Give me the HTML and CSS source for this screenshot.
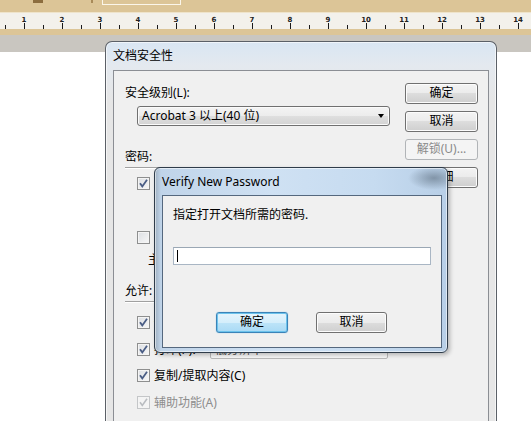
FILE: index.html
```html
<!DOCTYPE html>
<html lang="zh">
<head>
<meta charset="utf-8">
<title>文档安全性</title>
<link rel="stylesheet" href="styles.css">
</head>
<body>
<div class="toolbar">
  <div class="tb-icon"></div>
  <div class="tb-mark"></div>
  <div class="tb-box"></div>
</div>
<div class="ruler">
  <div class="ruler-nums">
    <span>1</span><span>2</span><span>3</span><span>4</span><span>5</span><span>6</span><span>7</span><span>8</span><span>9</span><span>10</span><span>11</span><span>12</span><span>13</span><span>14</span>
  </div>
</div>
<div class="ruler-edge"></div>
<div class="workspace">
  <div class="desk-band"></div>
  <div class="win dlg-main">
    <div class="win-title">文档安全性</div>
    <div class="panel">
      <div class="col-left">
        <div class="lbl lbl-level">安全级别(L):</div>
        <div class="combo">
          <span class="combo-text">Acrobat 3 以上(40 位)</span>
          <span class="combo-arrow"></span>
        </div>
        <div class="lbl grp-pass">密码:</div>
        <div class="sep"></div>
        <div class="row row-p1">
          <span class="cb"><svg width="11" height="11" viewBox="0 0 11 11"><path d="M2 5.2 L4.3 8.4 L9 1.8" fill="none" stroke="#4a5d85" stroke-width="1.8"/></svg></span>
          <span class="row-text">要求打开文档的密码(O)</span>
        </div>
        <div class="row row-p2">
          <span class="cb"></span>
          <span class="row-text">限制文档编辑和打印(R)</span>
        </div>
        <div class="lbl sub-text">主密码(M):</div>
        <div class="lbl grp-allow">允许:</div>
        <div class="sep"></div>
        <div class="row row-a1">
          <span class="cb"><svg width="11" height="11" viewBox="0 0 11 11"><path d="M2 5.2 L4.3 8.4 L9 1.8" fill="none" stroke="#4a5d85" stroke-width="1.8"/></svg></span>
          <span class="row-text">修改文档(M)</span>
        </div>
        <div class="row row-a2">
          <span class="cb"><svg width="11" height="11" viewBox="0 0 11 11"><path d="M2 5.2 L4.3 8.4 L9 1.8" fill="none" stroke="#4a5d85" stroke-width="1.8"/></svg></span>
          <span class="row-text print-lbl">打印(P):</span>
          <span class="mini-combo">低分辨率</span>
        </div>
        <div class="row row-a3">
          <span class="cb"><svg width="11" height="11" viewBox="0 0 11 11"><path d="M2 5.2 L4.3 8.4 L9 1.8" fill="none" stroke="#4a5d85" stroke-width="1.8"/></svg></span>
          <span class="row-text">复制/提取内容(C)</span>
        </div>
        <div class="row row-a4 disabled">
          <span class="cb"><svg width="11" height="11" viewBox="0 0 11 11"><path d="M2 5.2 L4.3 8.4 L9 1.8" fill="none" stroke="#b9bcc0" stroke-width="1.6"/></svg></span>
          <span class="row-text">辅助功能(A)</span>
        </div>
        <div class="row row-a5 disabled">
          <span class="cb"></span>
          <span class="row-text">页面提取(E)</span>
        </div>
      </div>
      <div class="col-right">
        <div class="btn">确定</div>
        <div class="btn">取消</div>
        <div class="btn btn-disabled">解锁(U)...</div>
        <div class="btn">详细</div>
      </div>
    </div>
  </div>

  <div class="win dlg-verify">
    <div class="verify-title">Verify New Password</div>
    <div class="verify-client">
      <div class="lbl verify-msg">指定打开文档所需的密码.</div>
      <div class="pw-field"><span class="caret"></span></div>
      <div class="verify-buttons">
        <div class="btn btn-default">确定</div>
        <div class="btn">取消</div>
      </div>
    </div>
  </div>
</div>
</body>
</html>
```

FILE: styles.css
```css
* { box-sizing: border-box; }
html, body { margin: 0; padding: 0; }
body {
  width: 531px;
  height: 421px;
  overflow: hidden;
  background: #fff;
  font-family: "Noto Sans", "Noto Sans CJK SC", sans-serif;
  font-size: 12px;
  line-height: 16px;
  color: #000;
}

/* ---------- top toolbar & ruler ---------- */
.toolbar {
  height: 13px;
  background: #dcc597;
  border-bottom: 1px solid #efe4cb;
  display: flex;
  align-items: flex-start;
}
.tb-icon {
  width: 10px;
  height: 3px;
  margin-left: 33px;
  background: #8c6d3e;
}
.tb-mark {
  width: 2px;
  height: 3px;
  margin-left: 48px;
  background: #a88a58;
}
.tb-box {
  width: 79px;
  height: 5px;
  margin-left: 9px;
  border: 1px solid #fbf6ea;
  border-top: none;
}
.ruler {
  height: 16px;
  background:
    linear-gradient(90deg, #1a1a1a 0 1px, transparent 1px) 24px 10px / 38px 6px repeat-x,
    linear-gradient(90deg, #1a1a1a 0 1px, transparent 1px) 5px 12px / 38px 4px repeat-x,
    #f3f1eb;
  overflow: hidden;
}
.ruler-nums {
  display: flex;
  padding: 4px 0 0 5px;
}
.ruler-nums span {
  flex: 0 0 38px;
  text-align: center;
  font: bold 7px/7px "DejaVu Sans", sans-serif;
  color: #222;
}
.ruler-edge {
  height: 6px;
  background: #dcc597;
}
.workspace {
  position: relative;
  height: 386px;
  background: #fff;
}
.desk-band {
  height: 17px;
  background: #c9c6c0;
}

/* ---------- generic window ---------- */
.win { position: absolute; }

/* main dialog */
.dlg-main {
  left: 105px;
  top: 6px;
  width: 392px;
  height: 400px;
  border: 1px solid #5b6067;
  border-bottom: none;
  border-radius: 7px 7px 0 0;
  background: linear-gradient(#d9e6f3 0, #e4e9ef 24px, #e6e6e6 60px);
  box-shadow: inset 0 0 0 1px rgba(255,255,255,.6);
  padding: 0 7px;
  display: flex;
  flex-direction: column;
}
.win-title {
  height: 28px;
  line-height: 27px;
  flex: none;
}
.panel {
  flex: 1;
  border: 1px solid #8b8e94;
  background: #f0f0f0;
  display: grid;
  grid-template-columns: 1fr 73px;
  align-items: start;
  padding: 12px 10px 0 11px;
}
.col-left {
  display: flex;
  flex-direction: column;
}
.col-right {
  display: flex;
  flex-direction: column;
  gap: 7px;
}
.lbl { height: 16px; white-space: nowrap; }
.lbl-level { margin-top: 2px; }
.combo {
  margin: 5px 0 0 12px;
  width: 253px;
  height: 20px;
  border: 1px solid #707070;
  border-radius: 3px;
  background: linear-gradient(#f4f4f4 0%, #ececec 50%, #dfdfdf 50%, #d3d3d3 100%);
  box-shadow: inset 0 0 0 1px #fbfbfb;
  display: flex;
  align-items: center;
  justify-content: space-between;
  padding: 0 5px 0 4px;
}
.combo-text { line-height: 16px; }
.combo-arrow {
  width: 0;
  height: 0;
  border-left: 3.5px solid transparent;
  border-right: 3.5px solid transparent;
  border-top: 4px solid #000;
}
.grp-pass { margin-top: 23px; }
.sep {
  margin-top: 2px;
  width: 270px;
  height: 2px;
  border-top: 1px solid #a0a0a0;
  border-bottom: 1px solid #fff;
}
.row {
  height: 13px;
  display: flex;
  align-items: center;
  padding-left: 12px;
  white-space: nowrap;
}
.cb {
  flex: none;
  width: 13px;
  height: 13px;
  border: 1px solid #8e8f8f;
  background: linear-gradient(135deg, #dcdfe3, #f7f7f7);
  box-shadow: inset 0 0 0 1px #f4f4f4;
  display: flex;
  align-items: center;
  justify-content: center;
}
.row-text { margin-left: 4px; }
.row-p1 { margin-top: 8px; }
.row-p2 { margin-top: 41px; }
.sub-text { margin-top: 8px; padding-left: 23px; }
.grp-allow { margin-top: 15px; }
.row-a1 { margin-top: 13px; }
.row-a2 { margin-top: 14px; }
.row-a3 { margin-top: 13px; }
.row-a4 { margin-top: 14px; }
.row-a5 { margin-top: 13px; }
.print-lbl { width: 56px; }
.mini-combo {
  width: 178px;
  height: 18px;
  flex: none;
  border: 1px solid #b9b9b9;
  border-radius: 2px;
  background: #f7f7f7;
  color: #555;
  padding-left: 4px;
  line-height: 16px;
}
.disabled .cb {
  border-color: #c4c6c8;
  background: #f4f4f4;
}
.disabled .row-text { color: #8d8d8d; }

/* buttons (Win7 look) */
.btn {
  height: 21px;
  border: 1px solid #707070;
  border-radius: 3px;
  background: linear-gradient(#f3f3f3 0%, #ebebeb 50%, #dddddd 50%, #cfcfcf 100%);
  box-shadow: inset 0 0 0 1px #fcfcfc;
  text-align: center;
  line-height: 18px;
  white-space: nowrap;
}
.btn-disabled {
  border-color: #b1b4b7;
  background: #f4f4f4;
  box-shadow: none;
  color: #8a8a8a;
}
.btn-default {
  border-color: #3b83b8;
  background: linear-gradient(#e6f4fc 0%, #d4eefb 50%, #bde4f8 50%, #a9daf5 100%);
  box-shadow: inset 0 0 0 1px #6cc3ec, 0 0 1px #5ab8e6;
}

/* verify dialog */
.dlg-verify {
  left: 154px;
  top: 132px;
  width: 294px;
  height: 186px;
  border: 1px solid #2f3c4a;
  border-radius: 6px;
  background:
    radial-gradient(ellipse 26px 12px at 279px 10px, rgba(110,128,146,.75), transparent),
    linear-gradient(90deg, #9fb0c1 0, #c0d4e9 6px, #cfe1f3 40%, #c6dbf0 75%, #b8cfe7 100%);
  box-shadow: inset 0 0 0 1px rgba(255,255,255,.55), 2px 2px 4px rgba(0,0,0,.25);
  padding: 0 5px 4px 7px;
  display: flex;
  flex-direction: column;
}
.verify-title {
  height: 27px;
  line-height: 27px;
  padding-left: 0;
  flex: none;
}
.verify-client {
  flex: 1;
  border: 1px solid #55687e;
  background: #f0f0f0;
  padding: 11px 0 0 10px;
  display: flex;
  flex-direction: column;
}
.verify-msg { flex: none; }
.pw-field {
  margin-top: 24px;
  width: 258px;
  height: 18px;
  border: 1px solid #a9b6c4;
  border-top-color: #9aa7b4;
  background: #fff;
  padding: 2px 0 0 3px;
  flex: none;
}
.caret {
  display: block;
  width: 1px;
  height: 12px;
  background: #000;
}
.verify-buttons {
  margin-top: 47px;
  display: flex;
  gap: 28px;
  padding-left: 43px;
}
.verify-buttons .btn { width: 72px; }
.verify-buttons .btn + .btn { width: 71px; }
```
